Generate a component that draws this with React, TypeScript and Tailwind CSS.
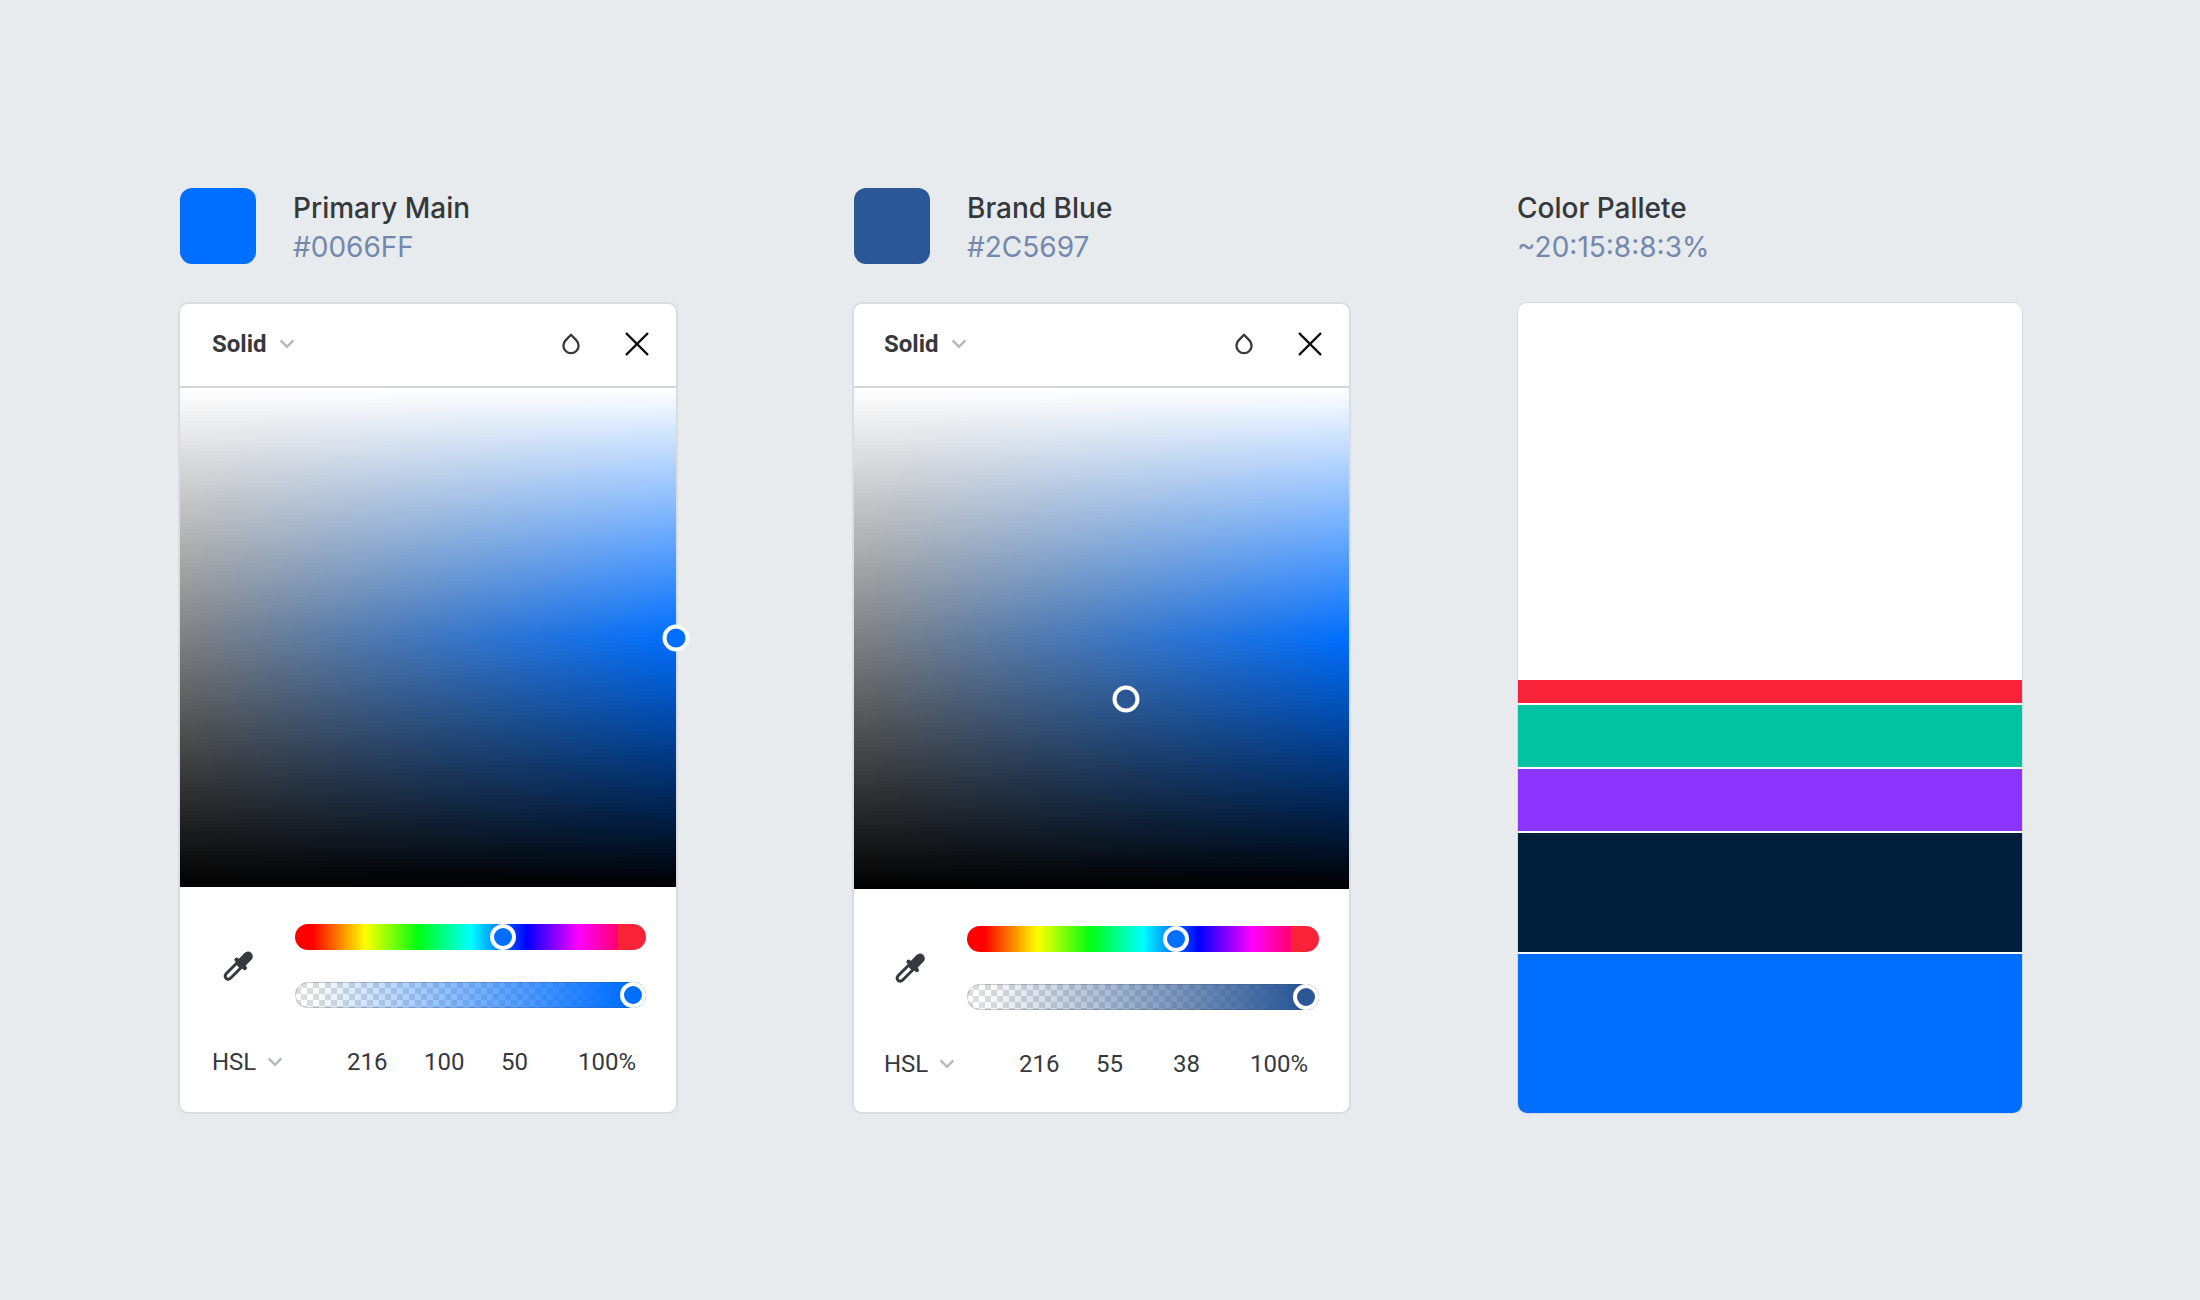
import React, { useState } from 'react';
import { clsx } from 'clsx';

interface Picker {
  id: string;
  name: string;
  hex: string;
  h: number;
  s: number;
  l: number;
  alpha: number;
  column: string;
  inset: string;
  fieldHeight: string;
  swatch: string;
  alphaTrack: string;
  alphaThumb: string;
}

const pickers: Picker[] = [
  {
    id: 'primary',
    name: 'Primary Main',
    hex: '#0066FF',
    h: 216,
    s: 100,
    l: 50,
    alpha: 100,
    column: 'flex-[500_1_0%]',
    inset: 'pl-8',
    fieldHeight: 'h-[499px]',
    swatch: 'bg-[#006eff]',
    alphaTrack:
      'bg-[linear-gradient(to_right,transparent_4%,#006eff_94%),repeating-conic-gradient(#dcdcdc_0_25%,#fff_0_50%)]',
    alphaThumb: '[&::-webkit-slider-thumb]:bg-[#006eff]',
  },
  {
    id: 'brand',
    name: 'Brand Blue',
    hex: '#2C5697',
    h: 216,
    s: 55,
    l: 38,
    alpha: 100,
    column: 'flex-[499_1_0%] ml-[174px]',
    inset: 'pl-[30px]',
    fieldHeight: 'h-[501px]',
    swatch: 'bg-[#2b5797]',
    alphaTrack:
      'bg-[linear-gradient(to_right,transparent_4%,#2b5797_94%),repeating-conic-gradient(#dcdcdc_0_25%,#fff_0_50%)]',
    alphaThumb: '[&::-webkit-slider-thumb]:bg-[#2b5797]',
  },
];

const palette = [
  { name: 'Red', className: 'bg-[#f82338] h-[23px]' },
  { name: 'Green', className: 'bg-[#02c3a1] h-[62px]' },
  { name: 'Purple', className: 'bg-[#8b33ff] h-[62px]' },
  { name: 'Navy', className: 'bg-[#001f3b] h-[119px]' },
  { name: 'Blue', className: 'bg-[#006eff] h-[159px]' },
];

const sliderClass =
  'block w-full h-[26px] m-0 appearance-none rounded-full cursor-pointer [&::-webkit-slider-thumb]:appearance-none [&::-webkit-slider-thumb]:size-[26px] [&::-webkit-slider-thumb]:rounded-full [&::-webkit-slider-thumb]:border-4 [&::-webkit-slider-thumb]:border-white';

const Chevron: React.FC<{ className?: string }> = ({ className }) => (
  <svg
    viewBox="0 0 16 10"
    className={clsx('w-4 h-[10px] pointer-events-none', className)}
    fill="none"
    stroke="#b5b8bd"
    strokeWidth="2.5"
    aria-hidden="true"
  >
    <path d="M1.6 1.4 8 7.8l6.4-6.4" />
  </svg>
);

const DropIcon: React.FC = () => (
  <svg viewBox="0 0 20 24" className="w-5 h-6" fill="none" stroke="#36383c" strokeWidth="2.3" strokeLinejoin="round" aria-hidden="true">
    <path d="M10 2.8 4.6 8.4A7.6 7.6 0 0 0 2.4 13.7 7.6 7.6 0 0 0 10 21.2a7.6 7.6 0 0 0 7.6-7.5 7.6 7.6 0 0 0-2.2-5.3Z" />
  </svg>
);

const CloseIcon: React.FC = () => (
  <svg viewBox="0 0 24 24" className="size-6" fill="none" stroke="#0b0c0e" strokeWidth="2.2" strokeLinecap="round" aria-hidden="true">
    <path d="M1.6 1.6 22.4 22.4M22.4 1.6 1.6 22.4" />
  </svg>
);

const EyedropperIcon: React.FC = () => (
  <svg viewBox="0 0 32 32" className="size-8" fill="none" stroke="#36393e" strokeLinecap="round" strokeLinejoin="round" aria-hidden="true">
    {/* glass tube */}
    <path d="M15.6 12.3 4.1 23.8a3.6 3.6 0 0 0 0 4.6 3.6 3.6 0 0 0 4.6-.4L20.2 16.5" strokeWidth="3" />
    {/* collar and bulb */}
    <path d="M14.6 9.8 22.8 18" strokeWidth="4.4" />
    <path d="M19.4 13.2 26 6.4" strokeWidth="9.6" />
    <path d="M18.2 14.2l2.4-2.4" strokeWidth="6" />
  </svg>
);

const ColumnHeading: React.FC<{ title: string; detail: string; swatch?: string }> = ({ title, detail, swatch }) => (
  <div className="flex items-center h-[78px] mb-[37px]">
    {swatch && <div className={clsx('size-[76px] rounded-xl mr-[37px] ml-0.5 shrink-0', swatch)} />}
    <div className="pt-1 text-[28px] leading-[39px]">
      <h2 className="font-medium text-[#36383b]">{title}</h2>
      <p className="text-[#7488ad]">{detail}</p>
    </div>
  </div>
);

const PickerCard: React.FC<{ picker: Picker }> = ({ picker }) => {
  const [hue, setHue] = useState(picker.h);
  const [alpha, setAlpha] = useState(picker.alpha);
  const values = [
    { label: 'Hue', value: String(hue) },
    { label: 'Saturation', value: String(picker.s) },
    { label: 'Lightness', value: String(picker.l) },
    { label: 'Opacity', value: `${alpha}%` },
  ];

  return (
    <div className="bg-white border-2 border-[#d9dce1] rounded-[10px] pb-8 font-[Roboto,sans-serif] text-2xl text-[#36393e]">
      <div className={clsx('flex items-center h-[84px] pr-[27px] pb-0.5 border-b-2 border-[#d3d6da]', picker.inset)}>
        <div className="relative flex items-center">
          <select aria-label={`${picker.name} fill type`} className="appearance-none bg-transparent font-bold pr-7 cursor-pointer">
            <option>Solid</option>
          </select>
          <Chevron className="absolute right-0" />
        </div>
        <button type="button" aria-label="Blend mode" className="ml-auto">
          <DropIcon />
        </button>
        <button type="button" aria-label="Close" className="ml-11">
          <CloseIcon />
        </button>
      </div>

      {/* Saturation / lightness field */}
      <div
        className={clsx(
          'relative bg-[linear-gradient(to_bottom,#fff,rgb(255_255_255/0)_50%,rgb(0_0_0/0)_50%,#000),linear-gradient(to_right,#808080,#006eff)]',
          picker.fieldHeight
        )}
      >
        <button
          type="button"
          aria-label={`${picker.name} saturation and lightness`}
          className={clsx('absolute size-[27px] rounded-full border-4 border-white -translate-1/2', picker.swatch)}
          style={{ left: `${picker.s}%`, top: `${100 - picker.l}%` }}
        />
      </div>

      <div className={clsx('flex items-center pt-[37px] pr-[30px]', picker.inset)}>
        <button type="button" aria-label="Pick color" className="w-[83px] pl-2.5">
          <EyedropperIcon />
        </button>
        <div className="flex-1 flex flex-col gap-8">
          <input
            type="range"
            min={0}
            max={360}
            value={hue}
            onChange={(e) => setHue(Number(e.target.value))}
            aria-label={`${picker.name} hue`}
            className={clsx(
              sliderClass,
              'bg-[linear-gradient(to_right,#f00_5%,#ff0_20%,#0f1_35%,#0ff_50%,#00f_66%,#f0f_81%,#ff0070_92%,#f82338_92%)]',
              '[&::-webkit-slider-thumb]:bg-[#006eff]'
            )}
          />
          <input
            type="range"
            min={0}
            max={100}
            value={alpha}
            onChange={(e) => setAlpha(Number(e.target.value))}
            aria-label={`${picker.name} opacity`}
            className={clsx(
              sliderClass,
              'bg-[size:100%_100%,12px_12px] shadow-[inset_0_0_0_1px_rgb(60_70_90/0.25)]',
              picker.alphaTrack,
              picker.alphaThumb
            )}
          />
        </div>
      </div>

      <div className={clsx('flex items-center pt-[38px]', picker.inset)}>
        <div className="relative flex items-center mr-16">
          <select aria-label={`${picker.name} color model`} className="appearance-none bg-transparent pr-[26px] cursor-pointer">
            <option>HSL</option>
          </select>
          <Chevron className="absolute right-0" />
        </div>
        {values.map((item) => (
          <input
            key={item.label}
            type="text"
            readOnly
            value={item.value}
            aria-label={`${picker.name} ${item.label}`}
            className="w-[77px] bg-transparent p-0"
          />
        ))}
      </div>
    </div>
  );
};

const App: React.FC = () => {
  return (
    <main className="min-h-screen bg-[#e7ebee] pl-[178px] pr-[177px] pt-[187px] pb-20 font-[Inter,sans-serif]">
      <div className="flex">
        {pickers.map((picker) => (
          <section key={picker.id} className={clsx('flex flex-col [&>*:last-child]:flex-1', picker.column)}>
            <ColumnHeading title={picker.name} detail={picker.hex} swatch={picker.swatch} />
            <PickerCard picker={picker} />
          </section>
        ))}

        <section className="flex-[506_1_0%] flex flex-col ml-[166px]">
          <ColumnHeading title="Color Pallete" detail="~20:15:8:8:3%" />
          <div className="flex-1 flex flex-col justify-end gap-0.5 bg-white border border-[#d5dae0] rounded-[10px] overflow-hidden">
            {palette.map((color) => (
              <div key={color.name} className={color.className} />
            ))}
          </div>
        </section>
      </div>
    </main>
  );
};

export default App;
